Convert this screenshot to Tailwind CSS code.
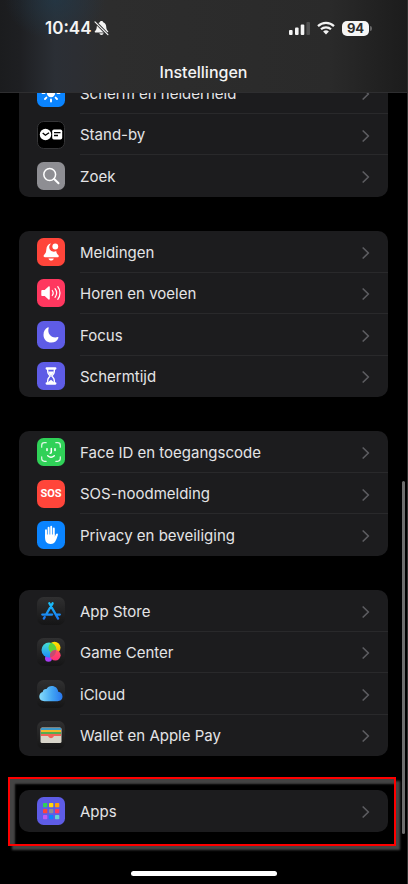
<!DOCTYPE html>
<html lang="nl">
<head>
<meta charset="utf-8">
<meta name="viewport" content="width=device-width, initial-scale=1">
<title>Instellingen</title>
<script src="https://cdn.jsdelivr.net/npm/@tailwindcss/browser@4"></script>
</head>
<body class="relative h-screen overflow-hidden border-r border-[#303030] bg-black font-['Inter','Liberation_Sans',sans-serif] text-[15px] text-[#e4e4e6]">

<svg class="hidden" aria-hidden="true">
  <symbol id="chevron" viewBox="0 0 8 12"><path d="M1.2 1 6.4 6 1.2 11" fill="none" stroke="#5c5c60" stroke-width="1.7" stroke-linecap="round" stroke-linejoin="round"/></symbol>
</svg>

<header class="absolute inset-x-0 top-0 z-10 flex h-[93px] flex-col border-b border-[#2e2e30] bg-[#2b2b2b] bg-[radial-gradient(ellipse_50px_40px_at_55px_0px,#213848b0,transparent),linear-gradient(90deg,#1b1c1e_0px,#1e1f22_20px,#2b2f35_55px,#2c2e33_75px,#2d2d2d_110px,#2a2a2a_330px,#1c1c1c_100%)]">
  <div class="flex items-center justify-between pt-4 pr-[35px] pl-[45px]">
    <div class="flex items-center gap-[3px] text-[17px] leading-6 font-semibold text-[#f4f4f4]">
      <span>10:44</span>
      <svg class="h-4 w-[15px]" viewBox="0 0 15 16" aria-label="Stille modus">
        <path d="M7.5 1c.9 0 1.500.5 1.700 1.200 2 .7 2.900 2.300 3 4.400.1 2.400.6 3.600 1.900 4.700.5.500.2 1.200-.5 1.200H1.400c-.7 0-1-.700-.5-1.200C2.200 10.200 2.700 9 2.800 6.600c.1-2.100 1-3.700 3-4.400C6 1.500 6.600 1 7.500 1ZM5.400 13.300h4.200c-.2 1-1 1.700-2.100 1.700s-1.900-.7-2.100-1.700Z" fill="#f4f4f4"/>
        <path d="M.9 1.600 13.800 14.800" stroke="#2c2d2f" stroke-width="3"/>
        <path d="M1 1.800 13.900 14.700" stroke="#f4f4f4" stroke-width="1.200" stroke-linecap="round"/>
      </svg>
    </div>
    <div class="flex items-center gap-[7px]">
      <svg class="h-[14px] w-[21px]" viewBox="0 0 21 14" aria-label="Signaal">
        <g fill="#f4f4f4"><rect y="9" width="3.600" height="5" rx="1"/><rect x="6" y="6.500" width="3.600" height="7.500" rx="1"/><rect x="11.700" y="3.500" width="3.600" height="10.500" rx="1"/></g><rect x="17.400" y="1" width="3.600" height="13" rx="1" fill="#505050"/>
      </svg>
      <svg class="h-[14px] w-[18px]" viewBox="0 0 18 14" aria-label="Wifi">
        <g fill="none" stroke="#f4f4f4" stroke-width="2.200"><path d="M1 5.100a11.500 11.500 0 0 1 16 0M4 8.300a7.200 7.200 0 0 1 10 0"/></g><path d="M6.100 10.600a4.200 4.200 0 0 1 5.800 0L9 13.500Z" fill="#f4f4f4"/>
      </svg>
      <div class="flex items-center gap-px">
        <span class="flex h-[15px] w-[27px] items-center justify-center rounded-[5px] bg-[#f5f5f5] text-[13px] leading-none font-bold text-[#2b2b2b]">94</span>
        <span class="h-[5px] w-[2px] rounded-r-full bg-[#666]"></span>
      </div>
    </div>
  </div>
  <h1 class="mt-5 text-center text-base leading-6 font-medium text-[#f4f4f4]">Instellingen</h1>
</header>

<main class="flex flex-col gap-[34px] pt-[72px] pr-[19px] pl-[19px]">

  <nav aria-label="Weergave" class="flex h-[125px] flex-col rounded-[10px] bg-[#1c1c1e]">
    <a href="#scherm" class="flex flex-1 items-center gap-[15px] pl-[18px]">
      <svg class="size-7 shrink-0" viewBox="0 0 28 28"><rect width="28" height="28" rx="6.500" fill="#0a84ff"/><circle cx="14" cy="14" r="4.200" fill="#fff"/><path d="M14 5.500v2M14 20.500v2M5.500 14h2M20.500 14h2M8 8l1.400 1.400M18.600 18.600 20 20M8 20l1.400-1.400M18.600 9.400 20 8" stroke="#fff" stroke-width="1.900" stroke-linecap="round"/></svg>
      <span class="flex flex-1 items-center justify-between self-stretch border-b border-[#29292b] pt-[3px] pr-[18px]">Scherm en helderheid<svg class="h-3 w-2"><use href="#chevron"/></svg></span>
    </a>
    <a href="#standby" class="flex flex-1 items-center gap-[15px] pl-[18px]">
      <svg class="size-7 shrink-0" viewBox="0 0 28 28"><rect x=".5" y=".5" width="27" height="27" rx="6.200" fill="#000" stroke="#343436"/><circle cx="8.500" cy="13.500" r="5.700" fill="#fff"/><path d="m5.700 12 2.700 2.200 3.600-2.500" fill="none" stroke="#000" stroke-width="1.400"/><rect x="15.200" y="8.500" width="10" height="10" rx="1.700" fill="#fff"/><path d="M17 11.700h6.500M17 14.500h4" stroke="#000" stroke-width="1.300"/></svg>
      <span class="flex flex-1 items-center justify-between self-stretch border-b border-[#29292b] pt-[3px] pr-[18px]">Stand-by<svg class="h-3 w-2"><use href="#chevron"/></svg></span>
    </a>
    <a href="#zoek" class="flex flex-1 items-center gap-[15px] pl-[18px]">
      <svg class="size-7 shrink-0" viewBox="0 0 28 28"><rect width="28" height="28" rx="6.500" fill="#8e8e93"/><circle cx="12.700" cy="12.500" r="5.900" fill="none" stroke="#fff" stroke-width="1.500"/><path d="m17.200 17 4.300 4.200" stroke="#fff" stroke-width="2" stroke-linecap="round"/></svg>
      <span class="flex flex-1 items-center justify-between self-stretch pt-[2px] pr-[18px]">Zoek<svg class="h-3 w-2"><use href="#chevron"/></svg></span>
    </a>
  </nav>

  <nav aria-label="Meldingen en focus" class="flex h-[166px] flex-col rounded-[10px] bg-[#1c1c1e]">
    <a href="#meldingen" class="flex flex-1 items-center gap-[15px] pl-[18px]">
      <svg class="size-7 shrink-0" viewBox="0 0 28 28"><rect width="28" height="28" rx="6.500" fill="#ff453a"/><path d="M14.200 5.500c-3.100.3-4.700 2.700-4.900 6.300-.1 2.300-.7 3.700-2.300 5.300-.8.900-.4 2.200.9 2.200h12.600c1.300 0 1.600-1.300.8-2.200-1.300-1.400-1.900-2.600-2.100-4.200a4.300 4.300 0 0 1-5-7.400ZM11.500 20.400h5.300c-.4 1.400-1.300 2.200-2.600 2.200s-2.300-.8-2.700-2.200Z" fill="#fff"/><circle cx="18.300" cy="8.500" r="2.900" fill="#fff"/></svg>
      <span class="flex flex-1 items-center justify-between self-stretch border-b border-[#29292b] pt-[3px] pr-[18px]">Meldingen<svg class="h-3 w-2"><use href="#chevron"/></svg></span>
    </a>
    <a href="#horen" class="flex flex-1 items-center gap-[15px] pl-[18px]">
      <svg class="size-7 shrink-0" viewBox="0 0 28 28"><rect width="28" height="28" rx="6.500" fill="#ff375f"/><path d="M4.300 12c0-.7.400-1.100 1.100-1.100h2.300l3.800-3.300c.7-.5 1.300-.2 1.300.6v11.600c0 .8-.6 1.100-1.300.6l-3.800-3.300H5.400c-.7 0-1.100-.4-1.100-1.100Z" fill="#fff"/><path d="M15.300 11.500c1.100 1.500 1.100 3.500 0 5M18 9.700c2 2.600 2 6 0 8.600M20.800 7.700c2.900 3.700 2.900 8.900 0 12.600" fill="none" stroke="#fff" stroke-width="1.200" stroke-linecap="round"/></svg>
      <span class="flex flex-1 items-center justify-between self-stretch border-b border-[#29292b] pt-[3px] pr-[18px]">Horen en voelen<svg class="h-3 w-2"><use href="#chevron"/></svg></span>
    </a>
    <a href="#focus" class="flex flex-1 items-center gap-[15px] pl-[18px]">
      <svg class="size-7 shrink-0" viewBox="0 0 28 28"><rect width="28" height="28" rx="6.500" fill="#5e5ce6"/><path d="M11 6.300c.5-.2.9.2.700.7-1.800 5.700 2.900 10.700 8.900 9.100.6-.2 1 .2.800.8-1.100 2.900-3.800 4.700-7.100 4.700-4.500 0-7.800-3.300-7.800-7.700 0-3.500 1.600-6.300 4.500-7.600Z" fill="#fff"/></svg>
      <span class="flex flex-1 items-center justify-between self-stretch border-b border-[#29292b] pt-[3px] pr-[18px]">Focus<svg class="h-3 w-2"><use href="#chevron"/></svg></span>
    </a>
    <a href="#schermtijd" class="flex flex-1 items-center gap-[15px] pl-[18px]">
      <svg class="size-7 shrink-0" viewBox="0 0 28 28"><rect width="28" height="28" rx="6.500" fill="#5e5ce6"/><path d="M9.700 6.500h8.600M9.700 21.500h8.600" stroke="#fff" stroke-width="2.300" stroke-linecap="round"/><path d="M10.600 7c0 4 .5 4.700 2.600 7-2.100 2.300-2.600 3-2.600 7M17.400 7c0 4-.5 4.700-2.600 7 2.100 2.300 2.600 3 2.600 7" fill="none" stroke="#fff" stroke-width="1.400"/><path d="M11.200 9.500h5.600c-.4 1.600-1.400 2.800-2.800 4.300-1.400-1.500-2.400-2.700-2.800-4.300ZM11 21c0-1.700 2-2.300 3-3.300 1 1 3 1.600 3 3.300Z" fill="#fff"/></svg>
      <span class="flex flex-1 items-center justify-between self-stretch pt-[2px] pr-[18px]">Schermtijd<svg class="h-3 w-2"><use href="#chevron"/></svg></span>
    </a>
  </nav>

  <nav aria-label="Beveiliging" class="flex h-[125px] flex-col rounded-[10px] bg-[#1c1c1e]">
    <a href="#faceid" class="flex flex-1 items-center gap-[15px] pl-[18px]">
      <svg class="size-7 shrink-0" viewBox="0 0 28 28"><rect width="28" height="28" rx="6.500" fill="#30d158"/><g fill="none" stroke="#fff" stroke-linecap="round"><path d="M4.700 9.200V7.400c0-1.700 1-2.700 2.700-2.700h1.800M18.800 4.700h1.800c1.700 0 2.700 1 2.700 2.700v1.800M23.300 18.800v1.800c0 1.700-1 2.700-2.700 2.700h-1.800M9.200 23.300H7.400c-1.700 0-2.700-1-2.700-2.700v-1.800" stroke-width="1.200" stroke-opacity=".85"/><path d="M10 10.700v1.700M18 10.700v1.700" stroke-width="1.600"/><path d="M14.300 10.500v3.700c0 .7-.4 1-1.100 1M10.700 17.700c1.900 1.700 4.700 1.700 6.600 0" stroke-width="1.500"/></g></svg>
      <span class="flex flex-1 items-center justify-between self-stretch border-b border-[#29292b] pt-[3px] pr-[18px]">Face ID en toegangscode<svg class="h-3 w-2"><use href="#chevron"/></svg></span>
    </a>
    <a href="#sos" class="flex flex-1 items-center gap-[15px] pl-[18px]">
      <span class="flex size-7 shrink-0 items-center justify-center rounded-[7px] bg-[#ff453a] font-['Roboto','Liberation_Sans',sans-serif] text-[11px] leading-none font-bold text-white">SOS</span>
      <span class="flex flex-1 items-center justify-between self-stretch border-b border-[#29292b] pt-[3px] pr-[18px]">SOS-noodmelding<svg class="h-3 w-2"><use href="#chevron"/></svg></span>
    </a>
    <a href="#privacy" class="flex flex-1 items-center gap-[15px] pl-[18px]">
      <svg class="size-7 shrink-0" viewBox="0 0 28 28"><rect width="28" height="28" rx="6.500" fill="#0a84ff"/><g fill="none" stroke="#fff" stroke-width="1.900" stroke-linecap="round"><path d="M9 16V9.200M11.600 14V6.700M14.200 14V5.800M16.800 14V7.500"/></g><path d="M8.050 13.500h9.700v2.300l1.300-2.700c.5-1 1.900-.9 1.900.3 0 .7-.9 3.100-1.800 5.300-1 2.800-2.800 4.300-5.600 4.300-3.600 0-5.500-2.400-5.500-6.200Z" fill="#fff"/></svg>
      <span class="flex flex-1 items-center justify-between self-stretch pt-[2px] pr-[18px]">Privacy en beveiliging<svg class="h-3 w-2"><use href="#chevron"/></svg></span>
    </a>
  </nav>

  <nav aria-label="Diensten" class="flex h-[166px] flex-col rounded-[10px] bg-[#1c1c1e]">
    <a href="#appstore" class="flex flex-1 items-center gap-[15px] pl-[18px]">
      <svg class="size-7 shrink-0" viewBox="0 0 28 28"><defs><linearGradient id="dark" x2="0" y2="1"><stop stop-color="#303031"/><stop offset="1" stop-color="#151516"/></linearGradient><linearGradient id="store" gradientUnits="userSpaceOnUse" x1="0" y1="5" x2="0" y2="23"><stop stop-color="#18c5fa"/><stop offset="1" stop-color="#1b72f0"/></linearGradient></defs><rect width="28" height="28" rx="6.500" fill="url(#dark)"/><g fill="none" stroke="url(#store)" stroke-width="2.300" stroke-linecap="round"><path d="m15.600 6.300-6.200 10.700M7.700 20.100l-.9 1.500M12.300 6.300l8.800 15.300M5.300 17.600h9.800M19.200 17.600h3.600"/></g></svg>
      <span class="flex flex-1 items-center justify-between self-stretch border-b border-[#29292b] pt-[3px] pr-[18px]">App Store<svg class="h-3 w-2"><use href="#chevron"/></svg></span>
    </a>
    <a href="#gamecenter" class="flex flex-1 items-center gap-[15px] pl-[18px]">
      <svg class="size-7 shrink-0" viewBox="0 0 28 28"><defs><linearGradient id="gb" x2="0" y2="1"><stop stop-color="#45dfd2"/><stop offset="1" stop-color="#1d8df8"/></linearGradient><linearGradient id="gy" x2="0" y2="1"><stop stop-color="#ffe500"/><stop offset="1" stop-color="#ffb000"/></linearGradient><linearGradient id="gp" x2="0" y2="1"><stop stop-color="#ff5363"/><stop offset="1" stop-color="#ff2d78"/></linearGradient><clipPath id="gclip"><circle cx="12" cy="12" r="7.500"/></clipPath></defs><rect width="28" height="28" rx="6.500" fill="url(#dark)"/><circle cx="17.500" cy="9.800" r="6" fill="url(#gy)"/><circle cx="11.500" cy="20.300" r="3.500" fill="#a83cf5"/><circle cx="12" cy="12" r="7.500" fill="url(#gb)"/><circle cx="17.500" cy="9.800" r="6" fill="#5ed23c" clip-path="url(#gclip)"/><circle cx="18.300" cy="17.200" r="5.300" fill="url(#gp)"/><path d="M13.100 16.200a5.300 5.300 0 0 1 5.900-4.200 7.500 7.500 0 0 1-5.800 7.400 5.300 5.300 0 0 1-.1-3.200Z" fill="#c44a72"/></svg>
      <span class="flex flex-1 items-center justify-between self-stretch border-b border-[#29292b] pt-[3px] pr-[18px]">Game Center<svg class="h-3 w-2"><use href="#chevron"/></svg></span>
    </a>
    <a href="#icloud" class="flex flex-1 items-center gap-[15px] pl-[18px]">
      <svg class="size-7 shrink-0" viewBox="0 0 28 28"><defs><linearGradient id="cloud"><stop stop-color="#86dcfb"/><stop offset=".55" stop-color="#42a5f3"/><stop offset="1" stop-color="#2876ee"/></linearGradient></defs><rect width="28" height="28" rx="6.500" fill="url(#dark)"/><path d="M7.400 21.200c-3 0-5.100-1.900-5.100-4.700 0-2.400 1.400-4.100 3.400-4.600.2-2 1.800-3.200 3.800-2.900 1.100-2 3-3 5.300-3 3.500 0 6.100 2.400 6.400 5.800 2.600.4 4.300 2.200 4.300 4.700 0 2.800-2.100 4.700-5 4.700Z" fill="url(#cloud)"/></svg>
      <span class="flex flex-1 items-center justify-between self-stretch border-b border-[#29292b] pt-[3px] pr-[18px]">iCloud<svg class="h-3 w-2"><use href="#chevron"/></svg></span>
    </a>
    <a href="#wallet" class="flex flex-1 items-center gap-[15px] pl-[18px]">
      <svg class="size-7 shrink-0" viewBox="0 0 28 28"><defs><clipPath id="wclip"><rect x="3.500" y="6.500" width="21" height="15.500" rx="1.500"/></clipPath></defs><rect width="28" height="28" rx="6.500" fill="url(#dark)"/><g clip-path="url(#wclip)"><path d="M3 6h22v17H3Z" fill="#d8d5ca"/><path d="M4 7h20v2H4Z" fill="#3d98c9"/><path d="M4 9h20v2H4Z" fill="#f5b62e"/><path d="M4 11h20v2H4Z" fill="#54ad50"/><path d="M4 13h20v2h-6.300c-.8 0-1.100.4-1.400 1-.9 1.500-3.700 1.500-4.600 0-.3-.6-.6-1-1.400-1H4Z" fill="#f06459"/></g></svg>
      <span class="flex flex-1 items-center justify-between self-stretch pt-[2px] pr-[18px]">Wallet en Apple Pay<svg class="h-3 w-2"><use href="#chevron"/></svg></span>
    </a>
  </nav>

  <nav aria-label="Apps" class="relative flex h-[42px] flex-col rounded-[10px] bg-[#1c1c1e]">
    <a href="#apps" class="flex flex-1 items-center gap-[15px] pl-[18px]">
      <svg class="size-7 shrink-0" viewBox="0 0 28 28"><rect width="28" height="28" rx="6.500" fill="#5e5ce6"/><rect x="6" y="6" width="4.300" height="4.300" rx=".7" fill="#30d158"/><rect x="12" y="6" width="4.300" height="4.300" rx=".7" fill="#ffd60a"/><rect x="18" y="6" width="4.300" height="4.300" rx=".7" fill="#ff9f0a"/><rect x="6" y="12" width="4.300" height="4.300" rx=".7" fill="#ff453a"/><rect x="12" y="12" width="4.300" height="4.300" rx=".7" fill="#8e8e93"/><rect x="18" y="12" width="4.300" height="4.300" rx=".7" fill="#ff375f"/><rect x="6" y="18" width="4.300" height="4.300" rx=".7" fill="#bf5af2"/><rect x="12" y="18" width="4.300" height="4.300" rx=".7" fill="#0a84ff"/><rect x="18" y="18" width="4.300" height="4.300" rx=".7" fill="#66d4cf"/></svg>
      <span class="flex flex-1 items-center justify-between self-stretch pt-[2px] pr-[18px]">Apps<svg class="h-3 w-2"><use href="#chevron"/></svg></span>
    </a>
    <div class="pointer-events-none absolute -top-[13px] -right-2 -bottom-[14px] -left-[11px] border-2 border-[#f00] shadow-[4px_4px_2px_#444,inset_5px_5px_2px_#444]"></div>
  </nav>
</main>

<div class="absolute top-[481px] right-[2px] h-[353px] w-[3px] rounded-full bg-[#6e6e6e]"></div>
<div class="absolute inset-x-0 bottom-2 mx-auto h-[5px] w-[146px] rounded-full bg-white"></div>
</body>
</html>
